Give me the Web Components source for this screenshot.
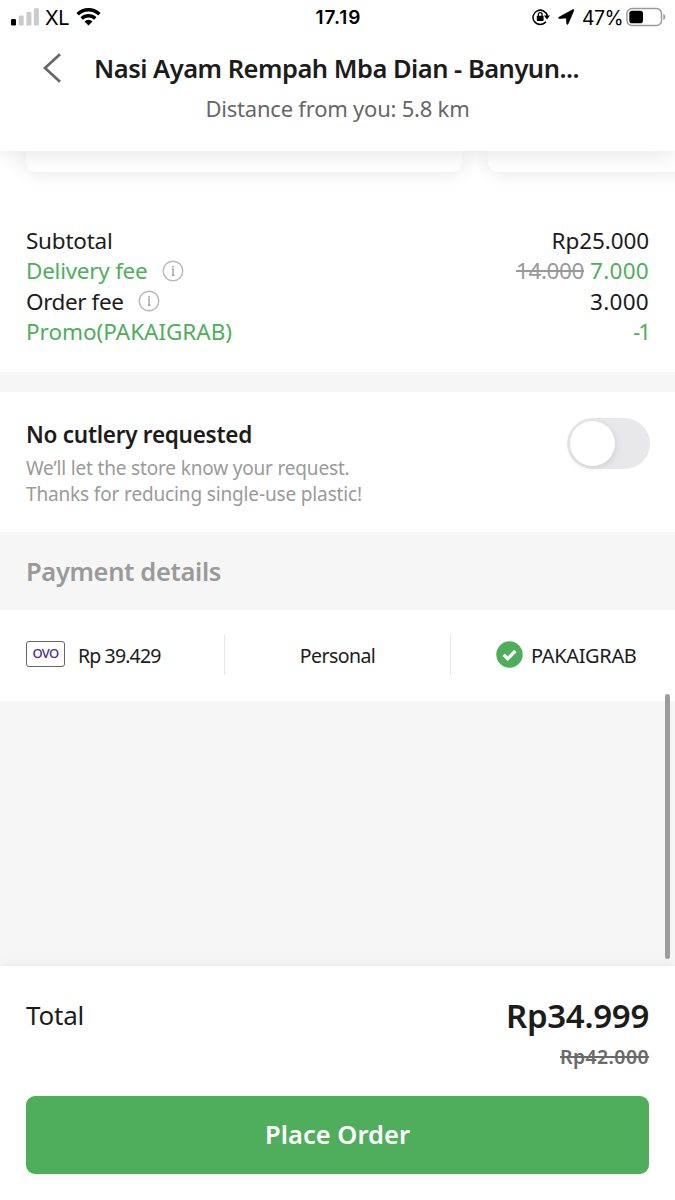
<!DOCTYPE html>
<html lang="id">
<head>
<meta charset="utf-8">
<title>Place order</title>
<style>
html,body{margin:0;padding:0;background:#fff}
body{width:675px;height:1200px;overflow:hidden;font-family:"Noto Sans","Open Sans",sans-serif;color:#1c1c1c}
</style>
</head>
<body>
<order-screen></order-screen>
<script>
function define(name, html, setup) {
  const t = document.createElement('template');
  t.innerHTML = html;
  customElements.define(name, class extends HTMLElement {
    connectedCallback() {
      if (this.shadowRoot) return;
      this.attachShadow({mode: 'open'}).append(t.content.cloneNode(true));
      if (setup) setup(this, this.shadowRoot);
    }
  });
}

/* A single line of text tracked to the advance width given in "w". */
define('fit-text', `<style>
:host{display:block;white-space:nowrap}
span{display:inline-block;vertical-align:top}
:host([struck]) span{text-decoration:line-through;text-decoration-thickness:1.500px}
</style><span><slot></slot></span>`, (host, root) => {
  const span = root.querySelector('span');
  const target = parseFloat(host.getAttribute('w'));
  const n = [...host.textContent].length;
  const gap = (target - span.getBoundingClientRect().width) / n;
  span.style.letterSpacing = gap.toFixed(3) + 'px';
});

define('status-bar', `<style>
:host{display:grid;grid-template-columns:1fr auto 1fr;align-items:center;height:34px;box-sizing:border-box;padding:0 9px 0 11px;color:#000;font:19.5px/34px Inter,sans-serif}
div{display:flex;align-items:center}
.r{justify-content:flex-end}
svg{display:block;flex:none}
.t{font-weight:600;font-size:19px;padding-top:1px}
</style>
<div>
<svg style="margin-top:-2px" width="28" height="18" viewBox="0 0 28 18"><rect x="0" y="11" width="5" height="6.500" rx="1.300"/><g fill="#cbcbcb"><rect x="7.700" y="7.500" width="5" height="10" rx="1.300"/><rect x="15.400" y="4" width="5" height="13.500" rx="1.300"/><rect x="22.900" y="0.300" width="5" height="17.200" rx="1.300"/></g></svg>
<fit-text w="24" style="margin-left:6px;font-size:20px">XL</fit-text>
<svg style="margin:-2px 0 0 7px" width="25" height="19" viewBox="0 0 25 19"><g fill="none" stroke="#000" stroke-width="3.500"><path d="M1.600 7.300a15.600 15.600 0 0 1 21.800 0"/><path d="M5.700 11.400a9.800 9.800 0 0 1 13.600 0"/></g><path d="M12.500 18.400l-4-4a5.700 5.700 0 0 1 8 0z"/></svg>
</div>
<fit-text class="t" w="46">17.19</fit-text>
<div class="r">
<svg style="margin-top:-1px" width="18" height="18" viewBox="0 0 18 18"><path d="M13.900 13.800A7.200 7.200 0 1 1 15.300 8" fill="none" stroke="#000" stroke-width="1.500"/><path d="M11.900 7.400h6l-2.900 4z"/><rect x="4.800" y="7.800" width="6.800" height="5.200" rx=".8"/><path d="M6.300 8.200V6.500a1.900 1.900 0 0 1 3.800 0v1.700" fill="none" stroke="#000" stroke-width="1.300"/></svg>
<svg style="margin:-2px 0 0 8px" width="17" height="16" viewBox="0 0 17 16"><path d="M.9 8.300L15 .6c.6-.3 1 .1.800.8L10 14.900c-.3.700-1.100.6-1.200-.1L8.300 8.900l-6.900.6C.4 9.500.1 8.700.9 8.300z" stroke="#000" stroke-width=".7"/></svg>
<fit-text w="41" style="margin-left:7px">47%</fit-text>
<svg style="margin:-2px 0 0 3px" width="40" height="20" viewBox="0 0 40 20"><rect x="1" y="1.500" width="34.500" height="17" rx="5" fill="none" stroke="#9a9a9a" stroke-width="1.500"/><rect x="3.300" y="3.800" width="13.700" height="12.400" rx="2.800"/><path d="M37.300 7v6c1.300-.5 2-1.700 2-3s-.7-2.500-2-3z" fill="#9a9a9a"/></svg>
</div>`);

define('top-bar', `<style>
:host{display:block;position:relative;z-index:1;height:150.500px;background:#fff;box-shadow:0 2px 22px rgba(0,0,0,.11)}
.row{display:flex;align-items:center;height:40px;padding:14px 0 0 42px}
.title{margin-left:32px;font:600 25.500px/40px "Noto Sans"}
.sub{display:flex;justify-content:center;font-size:22px;line-height:40px;color:#676767}
svg{display:block;margin-bottom:1px}
</style>
<status-bar></status-bar>
<div class="row"><svg width="20" height="32" viewBox="0 0 20 32"><path d="M18 2.200L3 16l15 13.800" fill="none" stroke="#676767" stroke-width="2.700"/></svg>
<fit-text class="title" w="485">Nasi Ayam Rempah Mba Dian - Banyun...</fit-text></div>
<div class="sub"><fit-text w="264">Distance from you: 5.8 km</fit-text></div>`);

define('promo-cards', `<style>
:host{display:flex;gap:26px;height:21.500px;padding-left:26px;overflow:visible}
div{flex:none;width:436px;height:21.500px;border-radius:0 0 9px 9px;background:#fff;box-shadow:0 2px 18px rgba(0,0,0,.085)}
</style><div></div><div></div>`);

define('info-icon', `<style>:host{display:block}svg{display:block}</style>
<svg width="22" height="22" viewBox="0 0 22 22"><circle cx="11" cy="11" r="9.800" fill="none" stroke="#b9b9b9" stroke-width="1.400"/><path d="M9.900 9.300h1.200v6M9.900 15.300h2.600" fill="none" stroke="#a4a4a4" stroke-width="1.400"/><rect x="10.200" y="5.900" width="1.700" height="1.700" fill="#a4a4a4"/></svg>`);

define('fee-row', `<style>
:host{display:flex;height:30.400px;align-items:center;font-size:22.500px;line-height:30.400px}
.v{display:flex;margin-left:auto;gap:6px}
::slotted(info-icon){margin:-1px 0 0 14px}
</style><slot></slot><div class="v"><slot name="value"></slot></div>`);

define('toggle-switch', `<style>
:host{display:flex;box-sizing:border-box;width:83px;height:51px;padding:3px;border-radius:26px;background:#e8e8ea}
i{width:45px;height:45px;border-radius:50%;background:#fff;box-shadow:1px 2px 7px rgba(0,0,0,.1)}
</style><i></i>`);

define('cutlery-option', `<style>
:host{display:flex;justify-content:space-between;height:140px;box-sizing:border-box;padding:26px 25px 0 26px}
h2{margin:2px 0 0;font-size:22.500px;font-weight:600;line-height:30px}
.n{font-size:19px;line-height:26px;color:#9a9a9a}
</style><div><h2><fit-text w="226">No cutlery requested</fit-text></h2>
<fit-text class="n" style="margin-top:5px" w="323.500">We’ll let the store know your request.</fit-text>
<fit-text class="n" w="336">Thanks for reducing single-use plastic!</fit-text></div>
<toggle-switch></toggle-switch>`);

define('ovo-badge', `<style>
:host{display:flex;box-sizing:border-box;width:39px;height:26px;margin-top:-2px;border:1px solid #666;border-radius:3px;justify-content:center;color:#4b2a86;font:500 13px/23px "Noto Sans"}
</style><fit-text w="26">OVO</fit-text>`);

define('payment-row', `<style>
:host{display:grid;grid-template-columns:225px 226px 1fr;align-items:center;height:91px;background:#fff;font-size:19.500px;line-height:40px}
div{display:flex;align-items:center;height:40px;box-sizing:border-box;border-right:1px solid #e6e6e6;margin-top:-1px}
div:last-child{border:0;padding-left:45px;gap:8px}
.a{padding-left:26px;gap:13px}
.b{justify-content:center}
div > fit-text{padding-top:2px}
svg{display:block;margin-top:-1px}
</style>
<div class="a"><ovo-badge></ovo-badge><fit-text w="82.500">Rp 39.429</fit-text></div>
<div class="b"><fit-text w="75.500">Personal</fit-text></div>
<div><svg width="27" height="27" viewBox="0 0 27 27"><circle cx="13.500" cy="13.500" r="13.200" fill="#4fae5b"/><path d="M7.600 13.700l4.100 4 7.700-7.700" fill="none" stroke="#fff" stroke-width="3.300"/></svg><fit-text w="105.500" style="font-size:20px">PAKAIGRAB</fit-text></div>`);

define('order-footer', `<style>
:host{display:block;position:relative;height:234.500px;box-sizing:border-box;padding:28px 26px 0;background:#fff;box-shadow:0 -1px 9px rgba(0,0,0,.07)}
.r{display:flex;justify-content:space-between;align-items:center;height:44px}
.l{font-size:26px;line-height:44px;margin-top:-2px}
.p{font-weight:600;font-size:33px;line-height:44px}
.o{display:flex;justify-content:flex-end;height:38px;font-size:19.500px;font-weight:600;line-height:38px;color:#6a6a6a}
button{display:flex;justify-content:center;align-items:center;width:623px;height:78px;margin:20px 0 0;padding:0;border:0;border-radius:9px;background:#4fae5b;color:#fff;font:600 25.500px/76px "Noto Sans"}
button fit-text{margin-top:-2px}
</style>
<div class="r"><fit-text class="l" w="58">Total</fit-text><fit-text class="p" w="143">Rp34.999</fit-text></div>
<div class="o"><fit-text struck w="89">Rp42.000</fit-text></div>
<button><fit-text w="145">Place Order</fit-text></button>`);

define('order-screen', `<style>
:host{display:flex;flex-direction:column;width:675px;height:1200px;position:relative;background:#fff;overflow:hidden}
.fees{height:146.200px;padding:53.800px 26px 0;box-sizing:content-box}
.gap{height:20px;background:#f6f6f6}
h3{margin:0;height:78px;padding-left:26px;background:#f6f6f6;color:#9a9a9a;font-size:25.500px;font-weight:600;line-height:78px}
.rest{flex:1;background:#f6f6f6}
.g{color:#4fae5b}.s{color:#9a9a9a}
.bar{position:absolute;left:665px;top:694px;width:5px;height:265px;border-radius:3px;background:#9c9c9c}
</style>
<top-bar></top-bar>
<promo-cards></promo-cards>
<div class="fees">
<fee-row><fit-text w="86.500">Subtotal</fit-text><fit-text slot="value" w="97.500">Rp25.000</fit-text></fee-row>
<fee-row><fit-text class="g" w="121.500">Delivery fee</fit-text><info-icon></info-icon><fit-text class="s" struck slot="value" w="68">14.000</fit-text><fit-text class="g" slot="value" w="59">7.000</fit-text></fee-row>
<fee-row><fit-text w="97.500">Order fee</fit-text><info-icon></info-icon><fit-text slot="value" w="59">3.000</fit-text></fee-row>
<fee-row><fit-text class="g" w="206">Promo(PAKAIGRAB)</fit-text><fit-text class="g" slot="value" w="16">-1</fit-text></fee-row>
</div>
<div class="gap"></div>
<cutlery-option></cutlery-option>
<h3><fit-text w="195">Payment details</fit-text></h3>
<payment-row></payment-row>
<div class="rest"></div>
<order-footer></order-footer>
<div class="bar"></div>`);
</script>
</body>
</html>
